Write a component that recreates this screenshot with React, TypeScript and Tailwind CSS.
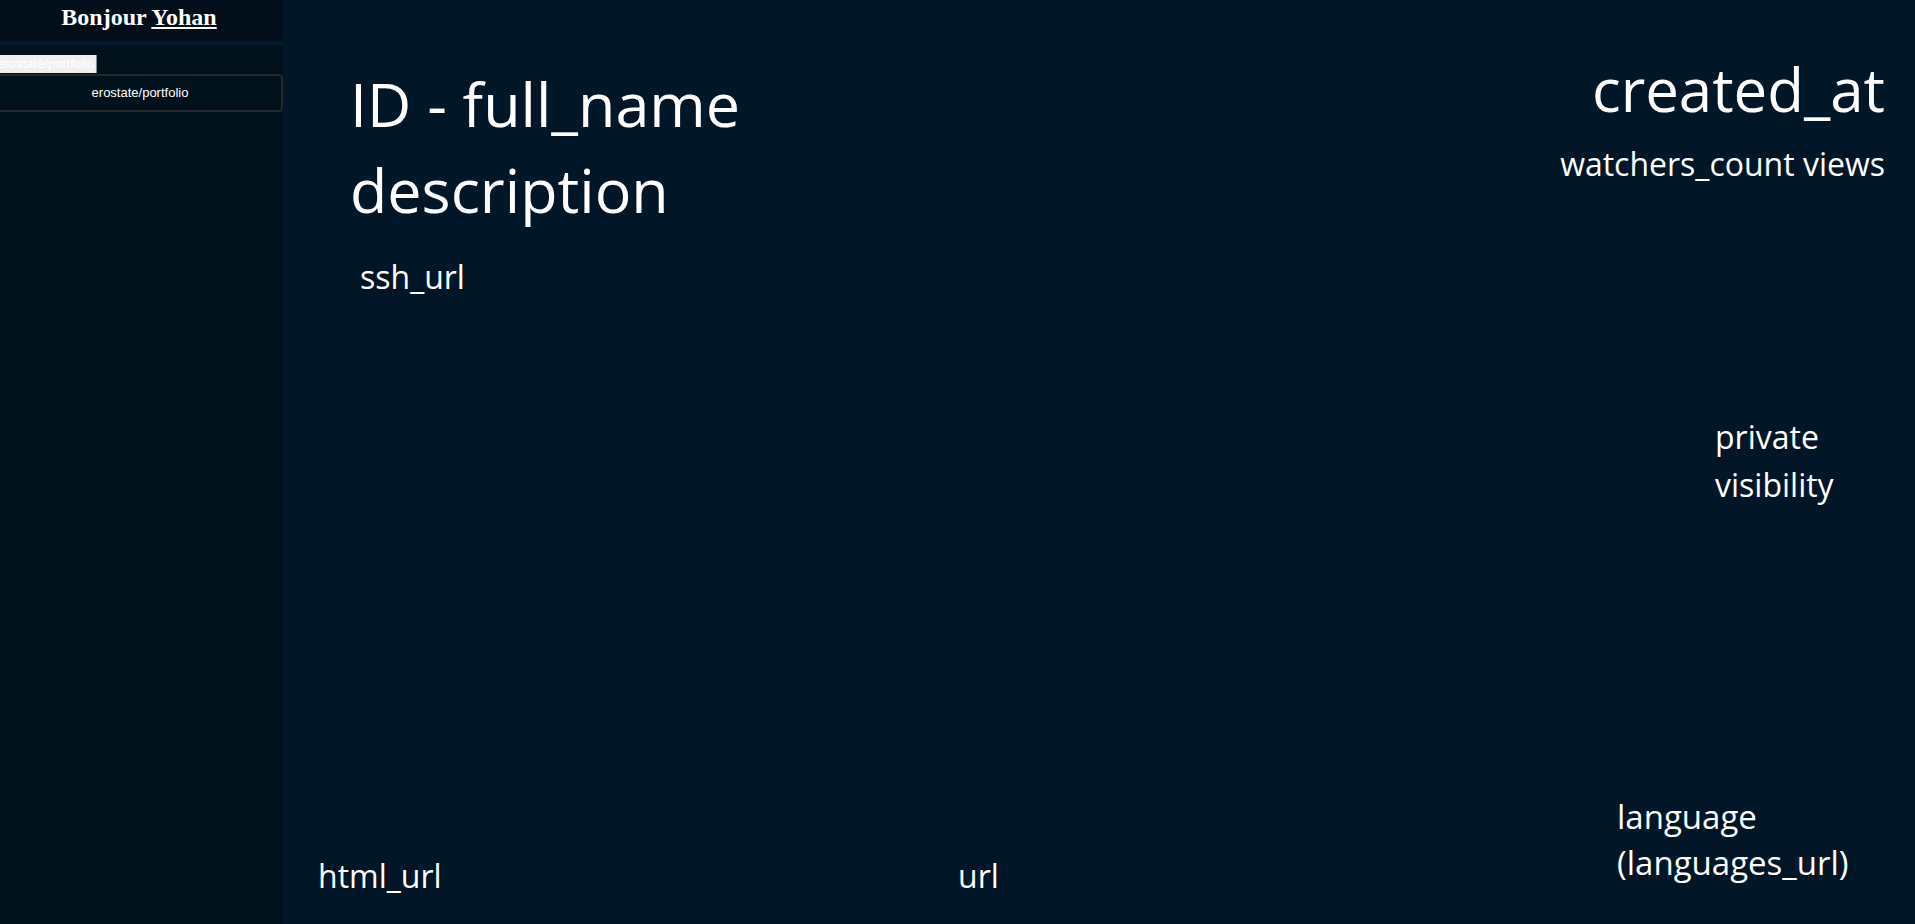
import React from "react";

const repo = {
  full_name: "erostate/portfolio",
};

const Sidebar: React.FC = () => {
  return (
    <aside className="w-[283px] shrink-0 h-full bg-[#01111c] flex flex-col overflow-hidden">
      <div className="h-[41px] bg-[#020e19] pt-[4px] pr-[5px] text-center">
        <h2 className="text-[24px] leading-[26px] font-bold text-white font-['Liberation_Serif',serif]">
          Bonjour <span className="underline">Yohan</span>
        </h2>
      </div>
      <div className="h-[4px] bg-[#04192b]" />
      <div className="mt-[10px] font-['Liberation_Sans',Arial,sans-serif] text-[13px]">
        <div className="w-[97px] h-[18px] bg-[#efefef] border-r border-[#8a8a8a] overflow-hidden flex justify-end items-center pr-[2px]">
          <span className="whitespace-nowrap text-white leading-[18px]">{repo.full_name}</span>
        </div>
        <button className="-ml-[3px] mt-px w-[286px] h-[38px] border-2 border-[#25282b] rounded-[4px] bg-transparent text-white text-[13px] flex items-center justify-center">
          {repo.full_name}
        </button>
      </div>
    </aside>
  );
};

const RepoView: React.FC = () => {
  return (
    <main className="flex-1 h-full bg-[#011627] text-white font-['Open_Sans',sans-serif] flex flex-col">
      <div className="flex justify-between items-start pl-[67px] pr-[30px]">
        <div className="pt-[61px]">
          <h1 className="text-[61px] leading-[86px] font-normal">ID - full_name</h1>
          <p className="text-[61px] leading-[86px]">description</p>
          <p className="text-[32px] leading-[42px] ml-[10px] mt-[23px]">ssh_url</p>
        </div>
        <div className="pt-[49px] text-right">
          <p className="text-[60px] leading-[80px]">created_at</p>
          <p className="text-[32px] leading-[42px] mt-[14px]">watchers_count views</p>
        </div>
      </div>

      <div className="flex justify-end pr-[70px] mt-[115px]">
        <div className="w-[130px] text-[32px] leading-[48px]">
          <p>private</p>
          <p>visibility</p>
        </div>
      </div>

      <div className="mt-auto flex items-end pl-[35px] pb-[25px] text-[32px] leading-[46px]">
        <p className="w-[640px]">html_url</p>
        <p className="w-[659px]">url</p>
        <div className="mb-[13px] text-[33px] leading-[46px]">
          <p>language</p>
          <p>(languages_url)</p>
        </div>
      </div>
    </main>
  );
};

const App: React.FC = () => {
  return (
    <div className="flex w-full h-screen overflow-hidden bg-[#011627]">
      <Sidebar />
      <RepoView />
    </div>
  );
};

export default App;
